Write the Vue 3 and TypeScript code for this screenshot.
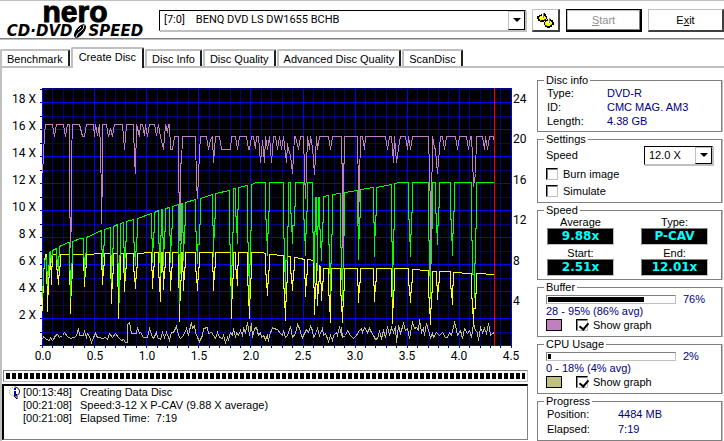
<script setup lang="ts">
import { ref } from 'vue'

type Point = [number, number]
type Dip = [left: number, middle: number, right: number, bottom: number]

const tabs = ['Benchmark', 'Create Disc', 'Disc Info', 'Disc Quality', 'Advanced Disc Quality', 'ScanDisc']
const activeTab = ref('Create Disc')
const simulate = ref(false)
const burnImage = ref(false)
const showBuffer = ref(true)
const showCpu = ref(true)

const discInfo = [
  ['Type:', 'DVD-R'],
  ['ID:', 'CMC MAG. AM3'],
  ['Length:', '4.38 GB'],
]
const speeds = [
  ['Average', '9.88x'],
  ['Type:', 'P-CAV'],
  ['Start:', '2.51x'],
  ['End:', '12.01x'],
]
const progress = [
  ['Position:', '4484 MB'],
  ['Elapsed:', '7:19'],
]
const log = [
  ['[00:13:48]', 'Creating Data Disc'],
  ['[00:21:08]', 'Speed:3-12 X P-CAV (9.88 X average)'],
  ['[00:21:08]', 'Elapsed Time:  7:19'],
]

/* Grid geometry, in chart units */
const range = (n: number) => Array.from({ length: n }, (_, i) => i)
const columns = range(46).map((i) => ({ x: Math.round(42 + i * 10.42), major: i % 5 === 0 }))
const rows = range(20).map((i) => ({ y: Math.round(345 - i * 13.5), major: i % 2 === 0 }))
const rightTicks = range(26).map((i) => Math.round(345 - i * 10.1))
const leftLabels = range(9).map((i) => ({ text: `${18 - i * 2} X`, y: 103 + i * 27 }))
const rightLabels = [24, 20, 16, 12, 8, 4].map((v, i) => ({ text: `${v}`, y: Math.round(103 + i * 40.4) }))
const bottomLabels = range(10).map((i) => ({ text: (i / 2).toFixed(1), x: 43 + i * 52 }))

const toPoints = (list: Point[]) => list.map(([x, y]) => `${x},${y}`).join(' ')

function levelAt(envelope: Point[], x: number): number {
  for (let i = 1; i < envelope.length; i++) {
    const [x0, y0] = envelope[i - 1]
    const [x1, y1] = envelope[i]
    if (x <= x1) return Math.round(y0 + ((y1 - y0) * (x - x0)) / Math.max(1, x1 - x0))
  }
  return envelope[envelope.length - 1][1]
}

/* A trace that follows its envelope and drops steeply at each dip */
function trace(envelope: Point[], dips: Dip[]): string {
  const out: Point[] = []
  let from = -Infinity
  for (const [l, m, r, b] of dips) {
    out.push(...envelope.filter(([x]) => x > from && x < l))
    const a = levelAt(envelope, l)
    const c = levelAt(envelope, r)
    const part = (top: number, share: number) => Math.round(top + (b - top) * share)
    out.push([l, a], [l, part(a, 0.5)], [l + 1, part(a, 0.5)], [l + 1, part(a, 0.8)], [m, part(a, 0.8)], [m, b])
    out.push([m, part(c, 0.7)], [r - 1, part(c, 0.7)], [r - 1, part(c, 0.4)], [r, part(c, 0.4)], [r, c])
    from = r
  }
  out.push(...envelope.filter(([x]) => x > from))
  return toPoints(out)
}

const speedLine = trace(
  [[42, 297], [43, 275], [44, 260], [49, 252], [59, 246], [68, 242], [80, 238], [86, 237], [99, 231], [104, 229],
    [117, 224], [133, 219], [152, 213], [158, 210], [169, 207], [178, 204], [185, 202], [200, 198], [212, 194],
    [229, 190], [234, 188], [247, 185], [256, 182], [312, 182], [315, 197], [323, 196], [332, 194], [344, 192],
    [357, 190], [373, 187], [392, 184], [399, 182], [494, 182]],
  [[46, 47, 49, 285], [50, 51, 52, 262], [56, 58, 59, 270], [69, 70, 72, 297], [83, 84, 86, 276], [101, 102, 104, 268],
    [110, 111, 113, 282], [117, 119, 120, 302], [123, 124, 126, 272], [133, 135, 137, 265], [151, 152, 154, 262],
    [158, 160, 161, 275], [162, 163, 165, 265], [169, 170, 172, 262], [178, 179, 181, 303], [182, 183, 185, 260],
    [195, 197, 200, 263], [212, 213, 215, 256], [229, 231, 233, 298], [235, 237, 238, 243], [247, 249, 251, 298],
    [265, 267, 269, 255], [283, 285, 288, 293], [290, 292, 295, 243], [303, 305, 307, 255], [312, 314, 315, 282],
    [316, 317, 318, 270], [319, 321, 323, 260], [328, 330, 332, 293], [340, 342, 344, 300], [357, 358, 360, 259],
    [373, 374, 376, 256], [391, 392, 394, 298], [408, 410, 412, 256], [428, 430, 432, 298], [435, 437, 439, 244],
    [450, 452, 454, 255], [471, 474, 476, 297]],
)

const rotationLine = trace(
  [[42, 311], [43, 275], [44, 262], [45, 254], [136, 253], [150, 252], [262, 252], [270, 254], [290, 256], [300, 258],
    [313, 260], [323, 268], [405, 268], [412, 269], [426, 270], [437, 271], [450, 271], [452, 272], [470, 273],
    [494, 274]],
  [[46, 47, 49, 311], [50, 51, 52, 284], [56, 58, 60, 284], [69, 70, 72, 313], [83, 84, 86, 286], [101, 102, 104, 284],
    [110, 111, 113, 303], [117, 118, 120, 318], [123, 124, 126, 291], [133, 135, 137, 288], [151, 152, 154, 288],
    [158, 160, 161, 301], [162, 163, 165, 289], [169, 170, 172, 290], [178, 179, 181, 321], [182, 183, 185, 290],
    [195, 197, 199, 290], [212, 213, 215, 290], [230, 231, 233, 318], [235, 237, 238, 285], [247, 249, 251, 318],
    [265, 267, 269, 295], [283, 285, 287, 320], [290, 292, 294, 290], [304, 305, 307, 296], [313, 314, 316, 314],
    [316, 317, 319, 305], [320, 321, 323, 300], [328, 330, 331, 322], [340, 342, 344, 322], [357, 358, 360, 302],
    [373, 374, 376, 301], [391, 392, 394, 323], [408, 410, 412, 302], [428, 430, 432, 324], [436, 437, 439, 299],
    [450, 452, 453, 304], [471, 473, 476, 323]],
)

const bufferLine =
  '42,173 43,155 44,133 45,124 52,124 54,136 56,124 63,124 65,136 67,124 69,124 69,217 70,217 70,247 71,217 71,155 72,124 ' +
  '79,124 82,136 84,136 86,124 93,124 94,136 95,124 97,135 99,124 100,148 101,197 101,223 102,172 102,124 106,124 ' +
  '108,136 110,128 112,136 114,124 122,124 124,149 126,124 133,124 134,160 135,173 136,124 139,136 140,124 142,124 ' +
  '144,135 145,124 147,136 149,124 154,124 156,135 158,124 160,136 163,149 165,124 167,132 168,124 169,124 170,149 ' +
  '172,149 174,136 178,136 178,192 179,192 179,240 180,240 180,163 181,163 182,136 195,136 196,183 197,198 199,152 200,136 206,136 208,149 ' +
  '210,139 212,136 213,162 215,136 219,136 221,149 230,149 231,136 235,136 237,149 239,136 246,136 248,149 249,149 ' +
  '251,136 253,136 255,148 256,136 258,136 260,162 262,140 264,162 265,136 267,149 269,136 271,162 273,136 275,136 ' +
  '277,149 279,136 281,149 283,136 286,162 287,143 288,149 290,155 292,173 294,136 295,136 298,149 300,136 303,136 ' +
  '304,170 305,198 306,168 307,136 309,149 310,136 312,147 314,174 316,136 317,149 319,136 328,136 330,149 332,136 ' +
  '341,136 341,163 342,163 342,247 343,247 343,163 344,163 344,136 357,136 358,190 358,223 359,182 360,136 362,136 364,149 365,136 385,136 ' +
  '387,149 389,136 391,136 393,162 394,136 396,162 398,148 400,136 405,136 407,149 408,136 410,149 412,136 428,136 ' +
  '429,170 430,210 430,270 431,210 432,136 434,147 435,149 437,173 439,148 440,136 442,136 444,149 446,136 455,136 457,149 ' +
  '459,136 466,136 468,149 470,136 471,136 472,157 473,186 475,173 476,136 482,136 484,149 485,136 487,149 489,136 ' +
  '493,136 494,143'

const cpuLine =
  '42,339 43,336 46,339 49,340 50,337 52,340 53,339 55,335 57,334 59,337 62,335 64,332 67,336 70,338 73,337 76,336 ' +
  '78,328 79,335 83,335 84,331 86,337 87,333 89,336 91,342 93,337 95,333 97,337 99,337 102,338 105,337 107,339 ' +
  '109,333 112,337 115,333 118,337 121,340 123,339 125,342 127,342 127,324 129,322 131,333 136,333 137,327 139,333 ' +
  '140,332 143,337 147,337 149,328 152,337 153,338 156,332 157,337 160,339 162,332 164,337 166,332 168,337 169,340 ' +
  '171,332 173,332 176,326 178,335 180,338 183,335 186,328 188,335 189,330 191,322 192,328 194,325 195,332 197,337 ' +
  '199,341 202,335 203,328 207,327 208,333 211,332 213,335 215,338 217,332 219,337 222,338 223,335 225,342 227,337 ' +
  '228,339 230,332 232,335 233,328 235,337 236,332 238,335 240,330 242,335 243,328 245,332 247,322 249,335 251,323 ' +
  '252,337 254,328 256,327 258,335 260,332 261,337 263,335 265,339 267,335 268,341 269,335 272,327 273,328 277,329 ' +
  '280,333 282,335 283,330 285,337 287,335 290,326 292,337 295,333 297,324 299,328 301,335 302,337 304,333 306,329 ' +
  '308,332 310,326 312,330 313,337 316,332 317,328 319,335 322,328 323,335 325,333 328,341 330,335 332,340 333,335 ' +
  '336,332 337,335 339,326 341,335 341,327 342,337 345,335 347,330 350,335 353,338 356,335 359,330 361,328 362,332 ' +
  '364,327 367,332 369,328 371,332 373,335 375,339 377,338 379,331 381,338 383,330 385,337 387,326 389,335 391,327 ' +
  '393,332 395,326 396,342 398,325 400,333 403,323 405,330 407,328 409,338 412,322 414,328 416,327 418,330 419,319 ' +
  '421,332 423,327 424,335 426,323 428,330 430,337 432,333 433,337 436,332 439,335 442,332 445,337 447,337 449,332 ' +
  '451,335 454,322 455,325 457,335 460,330 462,338 464,328 467,333 469,330 471,337 473,323 475,330 477,332 478,340 ' +
  '480,327 482,332 484,328 486,333 488,323 489,328 490,335 493,332 494,335'
</script>

<template>
  <div class="app">
    <header class="toolbar">
      <div class="logo" aria-label="nero CD-DVD SPEED">
        <span class="brand">nero</span>
        <span class="product">
          <span>CD·DVD</span>
          <svg class="swoosh" viewBox="0 0 16 14" aria-hidden="true">
            <ellipse cx="8" cy="7" rx="8" ry="4" transform="rotate(-50 8 7)" fill="#000" />
            <path d="M4 13 Q5 9 9 7 Q12 5 12 1" fill="none" stroke="#fff" stroke-width="1" />
            <path d="M6 6 l3 -3" stroke="#fff" stroke-width="1" />
          </svg>
          <span>SPEED</span>
        </span>
      </div>
      <div class="combo drive">
        <select aria-label="Drive"><option>[7:0]&nbsp;&nbsp;&nbsp; BENQ DVD LS DW1655 BCHB</option></select>
        <span class="arrow"></span>
      </div>
      <button class="button icon-button" type="button" aria-label="Options">
        <svg viewBox="0 0 18 16" width="18" height="16" aria-hidden="true" shape-rendering="crispEdges">
          <path d="M2 3h2v-1h2v-1h2v1h1v2h1v3h-1v2h-2v1h-4v-1h-2v-2h-1v-3h1z" fill="#000" />
          <path d="M3 4h5v1h1v2h-1v1h-5v-1h-1v-2h1z" fill="#ffff00" />
          <path d="M8 8h2v-1h4v1h2v2h1v3h-2v2h-2v1h-3v-1h-2v-2h-1v-3h1z" fill="#000" />
          <path d="M9 9h5v1h1v3h-2v1h-4v-1h-1v-3h1z" fill="#ffff00" />
          <path d="M5 1h2v5h-2zM11 6h2v5h-2z" fill="#808080" />
          <path d="M5 1h1v5h-1zM11 6h1v5h-1z" fill="#fff" />
          <path d="M3 8h1v1h-1zM7 7h1v1h-1zM9 13h1v1h-1zM14 12h1v1h-1z" fill="#808000" />
        </svg>
      </button>
      <button class="button start" type="button" disabled><u>S</u>tart</button>
      <button class="button" type="button">E<u>x</u>it</button>
    </header>

    <nav class="tabs" role="tablist">
      <button
        v-for="tab in tabs"
        :key="tab"
        type="button"
        role="tab"
        class="tab"
        :class="{ active: tab === activeTab }"
        :aria-selected="tab === activeTab"
        @click="activeTab = tab"
      >{{ tab }}</button>
    </nav>

    <main class="page">
      <section class="left">
        <svg class="chart" viewBox="2 68 532 300" role="img" aria-label="Write speed graph">
          <rect x="42" y="88" width="469" height="258" fill="#000" />
          <g shape-rendering="crispEdges">
            <g fill="#000080">
              <template v-for="c in columns" :key="c.x">
                <rect v-if="!c.major" :x="c.x" y="88" width="1" height="260" />
              </template>
              <template v-for="r in rows" :key="r.y">
                <rect v-if="!r.major" x="40" :y="r.y" width="471" height="1" />
              </template>
            </g>
            <g fill="#0000ff">
              <template v-for="c in columns" :key="c.x">
                <rect v-if="c.major" :x="c.x" y="88" width="1" height="260" />
              </template>
              <template v-for="r in rows" :key="r.y">
                <rect v-if="r.major" x="40" :y="r.y" width="471" height="1" />
              </template>
            </g>
            <rect v-for="y in rightTicks" :key="y" x="511" :y="y" width="1" height="1" fill="#000080" />
            <rect x="42" y="88" width="469" height="1" fill="#000080" />
          </g>
          <g class="traces" transform="translate(0.5 0.5)">
            <polyline v-if="showCpu" :points="cpuLine" stroke="#c0c080" />
            <polyline :points="rotationLine" stroke="#ffff00" />
            <polyline :points="speedLine" stroke="#00ff00" />
            <polyline v-if="showBuffer" :points="bufferLine" stroke="#c080c0" />
          </g>
          <rect x="494" y="88" width="1" height="258" fill="#ff0000" />
          <g class="labels">
            <text v-for="l in leftLabels" :key="l.text" x="36" :y="l.y" text-anchor="end">{{ l.text }}</text>
            <text v-for="l in rightLabels" :key="l.text" x="513" :y="l.y">{{ l.text }}</text>
            <text v-for="l in bottomLabels" :key="l.text" :x="l.x" y="360" text-anchor="middle">{{ l.text }}</text>
          </g>
        </svg>
        <div class="strip" role="progressbar" aria-valuenow="100" aria-label="Disc progress"><div class="blocks"></div></div>
        <div class="log">
          <svg class="log-icon" viewBox="0 0 12 13" aria-hidden="true">
            <path d="M6 1 a5 4.500 0 1 1 -1 9 M5 10 l3 3 v-3" fill="#fff" stroke="#000" />
            <path d="M6 1 a5 4.500 0 0 0 -1 9" fill="#fff" stroke="#888" stroke-dasharray="1 1" />
            <path d="M6 2v2M6 5v4M5 9h3" stroke="#0000c0" stroke-width="2" />
          </svg>
          <div class="log-lines">
            <div v-for="(line, i) in log" :key="i" class="log-line">
              <span>{{ line[0] }}</span><span>{{ line[1] }}</span>
            </div>
          </div>
        </div>
      </section>

      <aside class="side">
        <fieldset>
          <legend>Disc info</legend>
          <div v-for="item in discInfo" :key="item[0]" class="row">
            <span class="name">{{ item[0] }}</span><span class="value">{{ item[1] }}</span>
          </div>
        </fieldset>

        <fieldset>
          <legend>Settings</legend>
          <div class="speed-row">
            <label for="speed">Speed</label>
            <div class="combo speed">
              <select id="speed"><option>12.0 X</option></select>
              <span class="arrow"></span>
            </div>
          </div>
          <label class="check tall"><input v-model="burnImage" type="checkbox" />Burn image</label>
          <label class="check tall"><input v-model="simulate" type="checkbox" />Simulate</label>
        </fieldset>

        <fieldset>
          <legend>Speed</legend>
          <div class="readouts">
            <div v-for="s in speeds" :key="s[0]" class="readout">
              <span>{{ s[0] }}</span><output>{{ s[1] }}</output>
            </div>
          </div>
        </fieldset>

        <fieldset>
          <legend>Buffer</legend>
          <div class="meter-row">
            <div class="meter"><div class="fill" :style="{ width: '76%' }"></div></div>
            <span class="value">76%</span>
          </div>
          <div class="summary">28 - 95% (86% avg)</div>
          <div class="graph-row">
            <span class="swatch buffer"></span>
            <label class="check"><input v-model="showBuffer" type="checkbox" />Show graph</label>
          </div>
        </fieldset>

        <fieldset>
          <legend>CPU Usage</legend>
          <div class="meter-row">
            <div class="meter"><div class="fill" :style="{ width: '2%' }"></div></div>
            <span class="value">2%</span>
          </div>
          <div class="summary">0 - 18% (4% avg)</div>
          <div class="graph-row">
            <span class="swatch cpu"></span>
            <label class="check"><input v-model="showCpu" type="checkbox" />Show graph</label>
          </div>
        </fieldset>

        <fieldset>
          <legend>Progress</legend>
          <div v-for="item in progress" :key="item[0]" class="row wide">
            <span class="name">{{ item[0] }}</span><span class="value">{{ item[1] }}</span>
          </div>
        </fieldset>
      </aside>
    </main>
  </div>
</template>

<style>
body {
  background: #fff;
}
</style>

<style scoped>
.app,
.app button,
.app select {
  font-family: "Liberation Sans", Arial, sans-serif;
  font-size: 11px;
  line-height: 12px;
  color: #000;
}
.app * {
  box-sizing: border-box;
}
.toolbar {
  display: grid;
  grid-template-columns: 151px 1fr 28px 76px 76px;
  column-gap: 6px;
  align-items: center;
  height: 40px;
  padding-left: 2px;
  border-top: 1px solid #c0c0c0;
  border-bottom: 1px solid #c0c0c0;
  box-shadow: inset 0 -1px #808080;
}
.logo {
  display: flex;
  flex-direction: column;
  align-items: center;
  gap: 3px;
  width: 146px;
}
.brand {
  font: bold 30px/18px "Liberation Sans", Arial, sans-serif;
  -webkit-text-stroke: 1px #000;
}
.product {
  display: flex;
  align-items: center;
  font: italic bold 15px/14px "DejaVu Sans", sans-serif;
}
.swoosh {
  width: 16px;
  height: 14px;
}
.combo {
  display: flex;
  height: 21px;
  border: 1px solid #000;
  border-right-color: #c0c0c0;
  border-bottom-color: #c0c0c0;
  box-shadow: 1px 1px #c0c0c0;
  background: #fff;
}
.combo select {
  flex: 1;
  min-width: 0;
  padding: 0 4px;
  border: 0;
  appearance: none;
  background: transparent;
}
.app .drive select {
  font-family: Roboto, "Liberation Sans", sans-serif;
}
.arrow {
  display: flex;
  align-items: center;
  justify-content: center;
  width: 17px;
  border: 1px solid #c0c0c0;
  border-right: 1px solid #000;
  border-bottom: 1px solid #000;
}
.arrow::after {
  content: "";
  border: 4px solid transparent;
  border-top-color: #000;
  border-bottom: 0;
}
.button {
  height: 23px;
  padding: 0;
  border: 1px solid #c0c0c0;
  border-right: 2px solid #404040;
  border-bottom: 2px solid #404040;
  background: #fff;
}
.icon-button {
  display: flex;
  align-items: center;
  justify-content: center;
}
.start {
  border: 1px solid #000;
  border-right-width: 2px;
  border-bottom-width: 2px;
  box-shadow: inset -1px -1px #808080, inset 1px 1px #c0c0c0;
}
.app .start:disabled {
  color: #909090;
}
.tabs {
  display: flex;
  align-items: flex-end;
  gap: 1px;
  height: 28px;
  border-bottom: 2px solid #c0c0c0;
}
.app .tab {
  height: 17px;
  padding: 0 5px;
  border: 2px solid #c0c0c0;
  border-right: 2px solid #202020;
  border-bottom: 0;
  border-radius: 2px 2px 0 0;
  background: #fff;
}
.app .tab.active {
  height: 21px;
  margin-bottom: -2px;
  padding: 0 6px 3px;
}
.page {
  display: grid;
  grid-template-columns: 1fr 190px;
}
.left {
  border-left: 2px solid #c0c0c0;
}
.chart {
  display: block;
  width: 100%;
}
.traces {
  fill: none;
  stroke-width: 1px;
  shape-rendering: crispEdges;
}
.labels {
  font-family: Roboto, "Liberation Sans", sans-serif;
  font-size: 12px;
  fill: #000;
}
.strip {
  height: 12px;
  margin: 2px 6px 2px 1px;
  padding: 2px;
  border: 1px solid #808080;
  border-right-color: #c0c0c0;
  border-bottom-color: #c0c0c0;
}
.blocks {
  height: 6px;
  background: repeating-linear-gradient(90deg, #000 0 4px, #fff 4px 6px);
}
.log {
  display: flex;
  height: 56px;
  margin-right: 6px;
  padding: 0 5px;
  border: 1px solid #808080;
  border-top: 2px solid #000;
  border-left: 2px solid #000;
}
.log-icon {
  width: 12px;
  height: 13px;
  margin-right: 2px;
}
.log-line {
  display: grid;
  grid-template-columns: 57px auto;
  line-height: 13px;
  white-space: pre;
}
.side {
  display: flex;
  flex-direction: column;
  gap: 1px;
  padding: 6px 2px 0 3px;
}
fieldset {
  min-width: 0;
  margin: 0;
  padding: 0 8px 3px;
  border: 1px solid #808080;
  box-shadow: 1px 0 #c0c0c0;
}
legend {
  height: 12px;
  padding: 0 2px;
  margin-left: -2px;
}
.row {
  display: grid;
  grid-template-columns: 60px 1fr;
  padding-left: 1px;
  line-height: 14px;
}
.row.wide {
  grid-template-columns: 71px 1fr;
  line-height: 15px;
}
.value,
.summary {
  color: #000080;
}
.speed-row {
  display: flex;
  align-items: center;
  justify-content: space-between;
  height: 20px;
}
.combo.speed {
  width: 69px;
  height: 19px;
}
.check {
  display: flex;
  align-items: center;
  gap: 5px;
}
.check.tall {
  height: 17px;
}
.check input {
  position: relative;
  width: 12px;
  height: 12px;
  margin: 0;
  appearance: none;
  border: 1px solid #c0c0c0;
  border-top: 1px solid #000;
  border-left: 1px solid #000;
  box-shadow: inset 1px 1px #808080;
}
.check input:checked::after {
  content: "";
  position: absolute;
  left: 4px;
  top: 1px;
  width: 4px;
  height: 7px;
  border: solid #000;
  border-width: 0 2px 2px 0;
  transform: rotate(40deg);
}
.readouts {
  display: grid;
  grid-template-columns: 67px 67px;
  justify-content: space-between;
  row-gap: 2px;
  padding: 0 5px 0 1px;
}
.readout {
  text-align: center;
}
.readout span,
.readout output {
  display: block;
}
.readout output {
  height: 17px;
  border: 1px solid #c0c0c0;
  border-top-color: #808080;
  border-left-color: #808080;
  background: #000;
  color: #00ffff;
  font: bold 12px/14px "DejaVu Sans", sans-serif;
}
.meter-row {
  display: grid;
  grid-template-columns: 130px 1fr;
  column-gap: 7px;
  align-items: center;
  height: 12px;
}
.meter {
  height: 9px;
  padding: 1px;
  border: 1px solid #808080;
  border-right-color: #c0c0c0;
  border-bottom-color: #c0c0c0;
}
.fill {
  height: 5px;
  background: #000;
}
.graph-row {
  display: flex;
  align-items: center;
  gap: 14px;
  height: 16px;
}
.swatch {
  width: 16px;
  height: 12px;
  border: 1px solid #000;
}
.buffer {
  background: #c080c0;
}
.cpu {
  background: #c0c080;
}
</style>
